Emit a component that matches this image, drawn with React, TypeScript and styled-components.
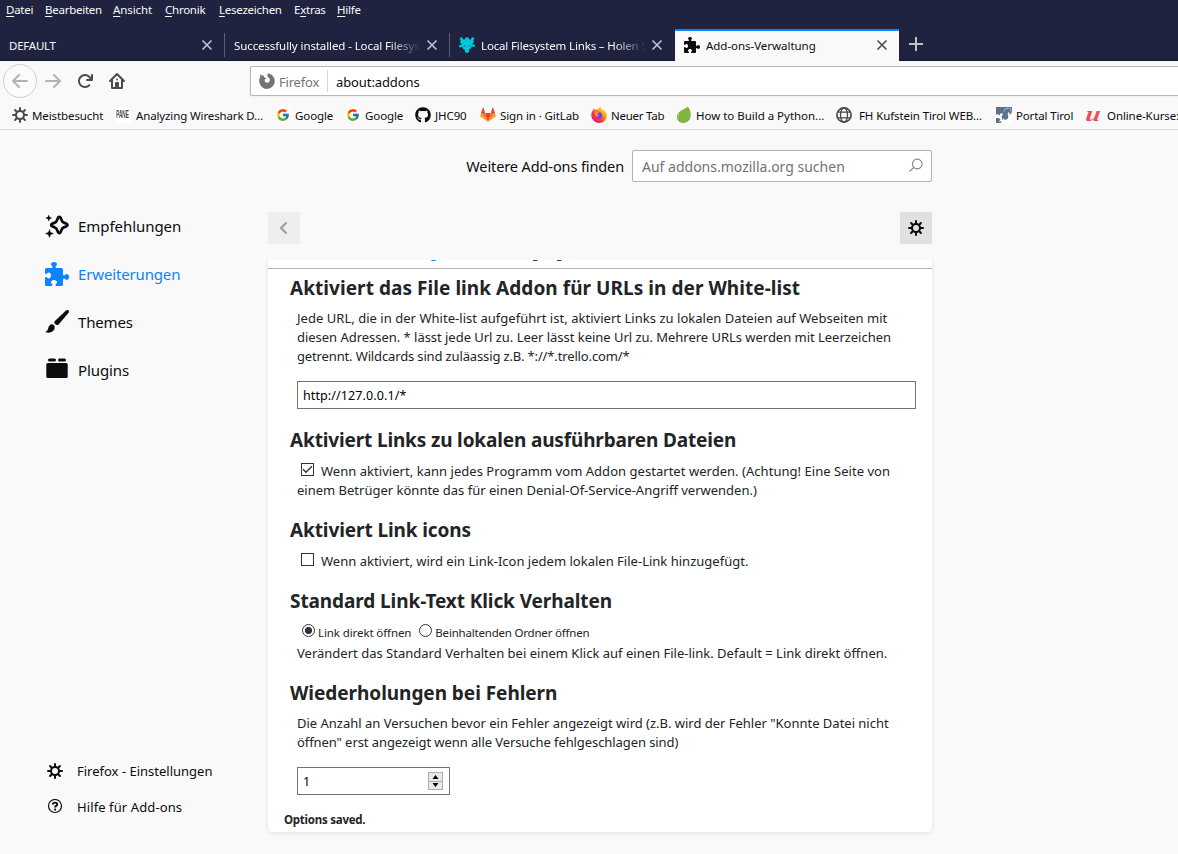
import React from "react";
import styled, { createGlobalStyle, css } from "styled-components";
import { FcGoogle } from "react-icons/fc";
import { FaGithub } from "react-icons/fa";

const Global = createGlobalStyle`
  * { box-sizing: border-box; }
  html, body { margin: 0; padding: 0; }
  body {
    width: 1178px; height: 854px; overflow: hidden;
    font-family: "Noto Sans", "Open Sans", sans-serif;
    background: #f9f9fa; color: #0c0c0d;
  }
`;

const Window = styled.div`
  width: 1178px;
  height: 854px;
  overflow: hidden;
  display: flex;
  flex-direction: column;
  background: #f9f9fa;
`;

const Label = styled.span<{ $ls?: number }>`
  white-space: nowrap;
  letter-spacing: ${(p) => p.$ls ?? 0}px;
`;

/* ---------- menu bar ---------- */
const MenuBar = styled.nav`
  height: 29px;
  display: flex;
  padding-left: 6px;
  background: #20233f;
  color: #f9f9fa;
  font-size: 11.5px;
  line-height: 19px;
`;
const MenuItem = styled.span<{ $w: number; $ls?: number }>`
  width: ${(p) => p.$w}px;
  flex: none;
  white-space: nowrap;
  letter-spacing: ${(p) => p.$ls ?? -0.25}px;
  u { text-underline-offset: 2px; text-decoration-thickness: 1px; }
`;

/* ---------- tabs ---------- */
const TabStrip = styled.div`
  height: 32px;
  display: flex;
  background: #20233f;
  box-shadow: inset 0 -1px 0 #14162b;
`;
const Tab = styled.div<{ $active?: boolean; $sep?: boolean }>`
  position: relative;
  width: 225px;
  flex: none;
  display: flex;
  align-items: center;
  padding: 0 12px 0 9px;
  font-size: 11.5px;
  color: #f9f9fa;
  ${(p) =>
    p.$active &&
    css`
      width: 224px;
      background: #f9f9fa;
      color: #0c0c0d;
      border-top: 2px solid #0a84ff;
      padding: 0 11px 2px 9px;
    `}
  ${(p) =>
    p.$sep &&
    css`
      &::after {
        content: "";
        position: absolute;
        right: 0;
        top: 4px;
        height: 24px;
        width: 1px;
        background: #5b5d73;
      }
    `}
`;
const TabText = styled.span<{ $fade?: boolean; $ls?: number }>`
  flex: 1;
  min-width: 0;
  overflow: hidden;
  white-space: nowrap;
  letter-spacing: ${(p) => p.$ls ?? -0.1}px;
  ${(p) =>
    p.$fade &&
    css`
      mask-image: linear-gradient(to left, transparent 0, #000 32px);
    `}
`;
const TabIcon = styled.span`
  width: 16px;
  height: 16px;
  margin-right: 6px;
  flex: none;
  display: flex;
`;
const CloseIcon = styled.svg<{ $c: string }>`
  width: 12px;
  height: 12px;
  margin-left: 5px;
  flex: none;
  stroke: ${(p) => p.$c};
`;
const NewTab = styled.span`
  width: 34px;
  display: flex;
  align-items: center;
  justify-content: center;
  padding-bottom: 2px;
`;

/* ---------- navigation ---------- */
const NavBar = styled.div`
  height: 40px;
  flex: none;
  display: flex;
  align-items: center;
  padding-left: 3px;
`;
const BackButton = styled.span`
  width: 34px;
  height: 34px;
  border: 1px solid #d0d0d1;
  border-radius: 50%;
  display: flex;
  align-items: center;
  justify-content: center;
  color: #b3b3b4;
  background: #fbfbfb;
`;
const NavButton = styled.span<{ $c: string }>`
  width: 32px;
  display: flex;
  justify-content: center;
  color: ${(p) => p.$c};
`;
const UrlBar = styled.div`
  margin-left: 117px;
  flex: 1;
  height: 30px;
  border: 1px solid #b8b8b9;
  border-right: 0;
  border-radius: 2px 0 0 2px;
  background: #fff;
  display: flex;
  align-items: center;
  font-size: 13px;
  box-shadow: 0 1px 3px rgba(0, 0, 0, 0.05);
  ${Label} { padding-top: 2px; }
`;
const Identity = styled.span`
  width: 77px;
  height: 22px;
  padding-left: 8px;
  display: flex;
  align-items: center;
  gap: 4px;
  color: #737373;
  border-right: 1px solid #d7d7db;
  margin-right: 8px;
`;

/* ---------- bookmarks ---------- */
const BookmarkBar = styled.div`
  height: 29px;
  flex: none;
  display: flex;
  align-items: center;
  padding-left: 12px;
  border-bottom: 1px solid #dcdcdd;
  font-size: 11.5px;
`;
const Bookmark = styled.span<{ $w: number; $gap?: number }>`
  width: ${(p) => p.$w}px;
  flex: none;
  display: flex;
  align-items: center;
  gap: ${(p) => p.$gap ?? 4}px;
  > svg { flex: none; }
`;
const GoogleMark = styled.span`
  width: 16px;
  height: 16px;
  flex: none;
  display: flex;
  align-items: center;
  justify-content: center;
  background: #fff;
  border-radius: 50%;
`;
const GearTint = styled.span`
  color: #4a4a4f;
  display: flex;
`;
const PaneMark = styled.span`
  width: 16px;
  height: 16px;
  flex: none;
  background: #fff;
  display: flex;
  align-items: center;
  justify-content: center;
  font: 700 10px/16px "Liberation Sans", sans-serif;
  color: #444;
  span { transform: scaleX(0.47); }
`;
const UMark = styled.span`
  width: 16px;
  flex: none;
  text-align: center;
  font: italic 700 22px/14px "Liberation Serif", serif;
  color: #ea5252;
  padding-bottom: 3px;
  span { display: inline-block; transform: scaleX(1.2) skewX(-6deg); }
`;

/* ---------- page ---------- */
const Page = styled.div`
  flex: 1;
  display: flex;
`;
const Sidebar = styled.aside`
  width: 268px;
  flex: none;
  display: flex;
  flex-direction: column;
  padding: 72px 0 29px 45px;
`;
const Category = styled.a<{ $active?: boolean }>`
  height: 48px;
  display: flex;
  align-items: center;
  gap: 9px;
  font-size: 15px;
  color: ${(p) => (p.$active ? "#0a84ff" : "#0c0c0d")};
`;
const Spacer = styled.div`
  flex: 1;
`;
const FooterLink = styled.a`
  height: 36px;
  display: flex;
  align-items: center;
  gap: 14px;
  padding-left: 2px;
  font-size: 13px;
`;
const Main = styled.main`
  width: 664px;
  display: flex;
  flex-direction: column;
`;
const SearchRow = styled.div`
  margin-top: 20px;
  display: flex;
  justify-content: flex-end;
  align-items: center;
  gap: 8px;
  font-size: 14.5px;
`;
const SearchBox = styled.div`
  width: 300px;
  height: 32px;
  border: 1px solid #b1b1b3;
  border-radius: 2px;
  background: #fff;
  display: flex;
  align-items: center;
  justify-content: space-between;
  padding: 0 7px 0 9px;
  color: #737373;
  font-size: 14px;
`;
const ToolRow = styled.div`
  margin-top: 30px;
  display: flex;
  justify-content: space-between;
`;
const Square = styled.span<{ $bg: string; $c: string }>`
  width: 32px;
  height: 32px;
  border-radius: 2px;
  display: flex;
  align-items: center;
  justify-content: center;
  background: ${(p) => p.$bg};
  color: ${(p) => p.$c};
`;
const Card = styled.section`
  margin-top: 16px;
  height: 572px;
  background: #fff;
  border-radius: 0 0 4px 4px;
  box-shadow: 0 1px 4px rgba(12, 12, 13, 0.1);
  clip-path: inset(0 -8px -8px -8px);
  color: #222426;
`;
const DeckTabs = styled.div`
  height: 9px;
  overflow: hidden;
  border-bottom: 1px solid #b1b1b3;
  display: flex;
  gap: 28px;
  padding-left: 102px;
  font-size: 13px;
`;
const DeckTab = styled.span<{ $active?: boolean }>`
  height: 20px;
  line-height: 20px;
  margin-top: -17px;
  white-space: nowrap;
  color: ${(p) => (p.$active ? "#0a84ff" : "#38383d")};
`;
const Heading = styled.h2<{ $ls?: number; $top: number }>`
  margin: ${(p) => p.$top}px 0 0 22px;
  height: 24px;
  font-size: 19px;
  line-height: 24px;
  font-weight: 700;
  white-space: nowrap;
  letter-spacing: ${(p) => p.$ls ?? 0}px;
`;
const Para = styled.div<{ $top: number }>`
  margin: ${(p) => p.$top}px 0 0 29px;
  font-size: 13px;
  line-height: 19px;
`;
const Line = styled.div<{ $ls?: number }>`
  height: 19px;
  display: flex;
  align-items: center;
  white-space: nowrap;
  letter-spacing: ${(p) => p.$ls ?? 0}px;
`;
const Field = styled.div<{ $w: number }>`
  margin: 15px 0 0 29px;
  width: ${(p) => p.$w}px;
  height: 28px;
  border: 1px solid #737373;
  background: #fff;
  color: #000;
  padding: 0 6px 0 5px;
  display: flex;
  align-items: center;
  justify-content: space-between;
  font-size: 12.5px;
`;
const Check = styled.span`
  width: 13px;
  height: 13px;
  border: 1px solid #333;
  margin: -4px 7px 0 4px;
  display: flex;
`;
const Radio = styled.span<{ $on?: boolean }>`
  width: 13px;
  height: 13px;
  border: 1px solid #333;
  border-radius: 50%;
  margin: -4px 3px 0 5px;
  ${(p) => p.$on && css`background: radial-gradient(circle, #333 3.2px, #fff 4px);`}
`;
const RadioLine = styled.div`
  height: 19px;
  margin: 10px 0 0 29px;
  display: flex;
  align-items: center;
  font-size: 11.5px;
`;
const RadioLabel = styled(Label)`
  margin-right: 3px;
`;
const Spin = styled.span`
  width: 15px;
  height: 18px;
  display: flex;
  flex-direction: column;
  border: 1px solid #adadad;
  background: #e9e9e9;
`;
const SpinHalf = styled.span`
  flex: 1;
  display: flex;
  align-items: center;
  justify-content: center;
  & + & { border-top: 1px solid #adadad; }
`;
const Saved = styled.div`
  margin: 16px 0 0 16px;
  font-size: 11.5px;
  line-height: 18px;
  font-weight: 700;
  letter-spacing: -0.25px;
`;

/* ---------- icons ---------- */
const Ico = ({ d, s = 16 }: { d: string; s?: number }) => (
  <svg width={s} height={s} viewBox="0 0 16 16" fill="currentColor" fillRule="evenodd">
    <path d={d} />
  </svg>
);
const PUZZLE =
  "M14.5 8c-.971 0-1 1-1.75 1a.765.765 0 0 1-.75-.75V5a1 1 0 0 0-1-1H7.75A.765.765 0 0 1 7 3.25c0-.75 1-.779 1-1.75C8 .635 7.1 0 6 0S4 .635 4 1.5c0 .971 1 1 1 1.75a.765.765 0 0 1-.75.75H1a1 1 0 0 0-1 1v2.25A.765.765 0 0 0 .75 8c.75 0 .779-1 1.75-1C3.365 7 4 7.9 4 9s-.635 2-1.5 2c-.971 0-1-1-1.75-1a.765.765 0 0 0-.75.75V15a1 1 0 0 0 1 1h3.25a.765.765 0 0 0 .75-.75c0-.75-1-.779-1-1.75 0-.865.9-1.5 2-1.5s2 .635 2 1.5c0 .971-1 1-1 1.75a.765.765 0 0 0 .75.75H11a1 1 0 0 0 1-1v-3.25a.765.765 0 0 1 .75-.75c.75 0 .779 1 1.75 1 .865 0 1.5-.9 1.5-2s-.635-2-1.5-2z";
const GEAR =
  "M15 7h-2.1a4.967 4.967 0 0 0-.732-1.753l1.49-1.49a1 1 0 0 0-1.414-1.414l-1.49 1.49A4.968 4.968 0 0 0 9 3.1V1a1 1 0 0 0-2 0v2.1a4.968 4.968 0 0 0-1.753.732l-1.49-1.49a1 1 0 0 0-1.414 1.415l1.49 1.49A4.967 4.967 0 0 0 3.1 7H1a1 1 0 0 0 0 2h2.1a4.968 4.968 0 0 0 .732 1.753l-1.49 1.49a1 1 0 1 0 1.414 1.414l1.49-1.49A4.968 4.968 0 0 0 7 12.9V15a1 1 0 0 0 2 0v-2.1a4.968 4.968 0 0 0 1.753-.732l1.49 1.49a1 1 0 0 0 1.414-1.414l-1.49-1.49A4.967 4.967 0 0 0 12.9 9H15a1 1 0 0 0 0-2zM5 8a3 3 0 1 1 3 3 3 3 0 0 1-3-3z";
const BACK =
  "M15 7H3.414l4.293-4.293a1 1 0 0 0-1.414-1.414l-6 6a1 1 0 0 0 0 1.414l6 6a1 1 0 0 0 1.414-1.414L3.414 9H15a1 1 0 0 0 0-2z";
const FORWARD =
  "M1 7h11.586L8.293 2.707a1 1 0 0 1 1.414-1.414l6 6a1 1 0 0 1 0 1.414l-6 6a1 1 0 0 1-1.414-1.414L12.586 9H1a1 1 0 0 1 0-2z";
const RELOAD =
  "M15 1a1 1 0 0 0-1 1v2.418A6.995 6.995 0 1 0 8 15a6.954 6.954 0 0 0 4.95-2.05 1 1 0 0 0-1.414-1.414A5.019 5.019 0 1 1 12.549 6H10a1 1 0 0 0 0 2h5a1 1 0 0 0 1-1V2a1 1 0 0 0-1-1z";
const HOME =
  "M15.707 7.293l-7-7a1 1 0 0 0-1.414 0l-7 7a1 1 0 0 0 1.414 1.414L2 8.414V15a1 1 0 0 0 1 1h10a1 1 0 0 0 1-1V8.414l.293.293a1 1 0 0 0 1.414-1.414zM12 14h-2v-4a1 1 0 0 0-1-1H7a1 1 0 0 0-1 1v4H4V6.414l4-4 4 4zM8 5.6a.9.9 0 1 1 0 1.8.9.9 0 0 1 0-1.8z";
const FOX =
  "M1.6 1c.3.7.8 1.200 1.300 1.600.8-.2 1.500-.1 2.100.2-.4.700-.2 1.400.5 1.800l1.900.4c0 .8-1.500 1.100-1.800 1.700-.1 1.800 1 3 2.500 3 1.800 0 2.900-1.300 2.800-2.900-.1-1-.7-1.800-1.400-2.300C8.200 3.500 7.800 2 9 .4c3.600.3 6.800 3.600 6.800 7.600a7.800 7.800 0 0 1-15.600.2c0-1.700.3-3 1-4.200-.2-1 0-2.100.4-3z";

const Close = ({ c }: { c: string }) => (
  <CloseIcon $c={c} viewBox="0 0 12 12" fill="none" strokeWidth="1.6">
    <path d="M1.5 1.5l9 9M10.5 1.5l-9 9" />
  </CloseIcon>
);
const AmoIcon = () => (
  <svg width="16" height="16" viewBox="0 0 16 16" fill="#00c8d7">
    <path d="M2.2.2c1 0 1.500.7 1.500 1.400 0 .5.300.9.9.9h1c.5 0 .6-.4.5-.9C6 .8 7 .2 8 .2s2 .6 1.900 1.400c-.1.500 0 .9.5.9h1c.6 0 .9-.4.9-.9 0-.7.500-1.400 1.500-1.400s1.500.8 1.400 1.500c-.1.9-.9 1-.9 1.600 0 .5.300.8.6 1.200.3.600 0 1-.5 1.300-.6.4-1 .6-.9 1.200.1.500.600.500 1.200.4.700-.1 1.300.300 1.300 1.200s-.7 1.400-1.500 1.300c-.7-.1-.8-.5-1.300-.5-.6 0-.7.5-.9 1.200-.2.900-.8 1.300-1.400 1.400-.6.1-.8.5-.8 1C10.100 14.700 9.400 16 8 16s-2.100-1.300-2.100-2.500c0-.5-.2-.9-.8-1-.6-.1-1.200-.5-1.400-1.400-.2-.7-.3-1.200-.9-1.200-.5 0-.6.4-1.300.5C.7 10.500 0 10 0 9.100s.600-1.300 1.300-1.200c.600.1 1.100.1 1.200-.4.100-.600-.3-.8-.9-1.200-.5-.3-.8-.7-.5-1.300.3-.4.6-.7.6-1.200 0-.6-.8-.7-.9-1.600C.7 1 1.200.2 2.200.2z" />
    <path d="M4.900 9.300c.2-.8 1.100-.9 1.500-.1M11.100 9.300c-.2-.8-1.100-.9-1.500-.1" stroke="#20233f" strokeWidth=".7" fill="none" />
  </svg>
);
const GitLabIcon = () => (
  <svg width="16" height="16" viewBox="0 0 16 16">
    <path d="M8 15L5.100 6h5.800z" fill="#e24329" />
    <path d="M8 15L5.100 6H1z" fill="#fc6d26" />
    <path d="M8 15l2.900-9H15z" fill="#fc6d26" />
    <path d="M1 6L.1 8.700c-.1.300 0 .600.200.700L8 15zM15 6l.9 2.700c.1.300 0 .600-.2.700L8 15z" fill="#fca326" />
    <path d="M1 6L2.900.7c.1-.3.500-.3.600 0L5.100 6zM15 6L13.100.7c-.1-.3-.5-.3-.6 0L10.900 6z" fill="#e24329" />
  </svg>
);
const FirefoxIcon = () => (
  <svg width="16" height="16" viewBox="0 0 16 16">
    <defs>
      <linearGradient id="fx" x1="0.85" y1="0.1" x2="0.15" y2="0.9">
        <stop offset="0" stopColor="#fff44f" />
        <stop offset="0.35" stopColor="#ff980e" />
        <stop offset="0.65" stopColor="#ff3647" />
        <stop offset="1" stopColor="#e31587" />
      </linearGradient>
    </defs>
    <path d="M9.300 0c1 .7 1.500 1.700 1.700 2.600l1-.2c2.600 1.300 4 3.500 4 6a7.800 7.600 0 0 1-15.700 0C.2 6 1 4.300 2 3l.5-1.600c.5.3.9.7 1.200 1.200 1.200-.4 2.300-.2 3.200.2C7.100 1.700 8 .6 9.300 0z" fill="url(#fx)" />
    <circle cx="8.100" cy="8.400" r="3.100" fill="#7542e5" />
    <path d="M3.700 5.300c1.500-.8 3-.5 4.200.4-.2.900-1.400 1-1.800 1.500-.1.900 1 1.500 2.100 1.100-1 2-3.600 1.500-4.300-.3z" fill="#ff9a1f" />
  </svg>
);
const LeafIcon = () => (
  <svg width="16" height="16" viewBox="0 0 16 16">
    <path d="M11.200.2c.7-.4 1.300-.1 1.900 1 1.800 3.400 2.300 8 .6 11-1.500 2.700-4.400 4-7.300 3.700C3.200 15.600 1 13.200 1 9.800 1 4.500 7.500 2.500 11.200.2z" fill="#81b441" />
    <path d="M3.200 5.600c-.8 1.500-1 3.400-.3 5.200" stroke="#a9cf7d" strokeWidth=".8" fill="none" />
  </svg>
);
const GlobeIcon = () => (
  <svg width="16" height="16" viewBox="0 0 16 16" fill="none" stroke="#4a4a4f" strokeWidth="1.300">
    <circle cx="8" cy="8" r="7.100" strokeWidth="1.700" />
    <ellipse cx="8" cy="8" rx="3.500" ry="7" />
    <path d="M1.500 5.200h13M1.500 10.800h13" />
  </svg>
);
const TirolIcon = () => (
  <svg width="16" height="16" viewBox="0 0 16 16">
    <rect width="16" height="16" fill="#5c718c" />
    <path d="M0 8l2-1 1.500 1.500L5 6l2 1-1 2 1 2 2 2 2.500-1 1-2.500-1-3L13 5l1 3 2-3v11H5l.5-2-2.500 1 1.500-3L2 11H0z" fill="#fff" />
    <path d="M7.500 4l1.500-1 .5-1.500 1.500.5 1-1.500 1 1 1.500 0 .5 3" fill="none" stroke="#cfd8e2" strokeWidth="1" strokeDasharray="1.500 .8" />
    <path d="M6 9l1 3.500" stroke="#5c718c" strokeWidth="1.200" />
  </svg>
);
const SparkleIcon = () => (
  <svg width="24" height="24" viewBox="0 0 24 24" fill="#0c0c0d">
    <path
      d="M14.300 3c1.200 0 1.600 1.400 2 2.600.6 1.800 1.200 2.600 2.900 3.200 1.500.5 3.200 1 3.200 2.200s-1.700 1.700-3.200 2.200c-1.700.6-2.300 1.400-2.900 3.200-.4 1.200-.8 2.600-2 2.600s-1.600-1.400-2-2.600c-.6-1.800-1.200-2.600-2.900-3.200-1.500-.5-3.200-1-3.200-2.200s1.700-1.700 3.200-2.200c1.700-.6 2.300-1.400 2.900-3.200.4-1.200.8-2.600 2-2.600z"
      fill="none"
      stroke="#0c0c0d"
      strokeWidth="2.800"
    />
    <path d="M3.700.5l1 2.500 2.500 1-2.500 1-1 2.500-1-2.500-2.500-1 2.500-1zM4.500 15l1.300 3.200 3.200 1.300-3.200 1.300L4.500 24l-1.300-3.200L0 19.500l3.200-1.300z" />
  </svg>
);
const BrushIcon = () => (
  <svg width="24" height="24" viewBox="0 0 24 24" fill="#0c0c0d">
    <path d="M23.600.4c.7.7.5 1.700-.2 2.500l-9.800 11.500c-1 .9-2.500.7-3.500-.3s-1.200-2.300-.2-3.200L21 .6c.8-.7 1.900-.9 2.600-.2z" />
    <path d="M8 14.700c1.500.2 2.300 1.400 2.200 3.100-.1 2.600-2.700 5.200-6.500 5.200-1.400 0-2.700-.3-3.700-.9 2-.3 2.700-1.300 3.300-3.300.7-2.700 2.200-4.500 4.700-4.100z" transform="translate(0 -.3) scale(.95 1)" />
  </svg>
);
const PluginIcon = () => (
  <svg width="24" height="24" viewBox="0 0 24 24" fill="#0c0c0d">
    <rect x="3" y="0.5" width="8" height="3" rx="1.500" />
    <rect x="13" y="0.5" width="8" height="3" rx="1.500" />
    <rect x="1.300" y="5" width="21.400" height="15" rx="1.500" />
  </svg>
);
const HelpIcon = () => (
  <svg width="16" height="16" viewBox="0 0 16 16" fill="none" stroke="#0c0c0d">
    <circle cx="8" cy="7" r="6.500" strokeWidth="1.200" />
    <path d="M5.900 5.500c0-1.300 1-1.900 2.100-1.900s2.200.8 2.200 1.900c0 1.400-2.100 1.400-2.100 2.900" strokeWidth="1.900" />
    <circle cx="8.100" cy="10.600" r="1.100" fill="#0c0c0d" stroke="none" />
  </svg>
);
const SearchIcon = () => (
  <svg width="16" height="16" viewBox="0 0 16 16" fill="none" stroke="#858586" strokeWidth="1.100">
    <circle cx="9.300" cy="6" r="4.900" />
    <path d="M5.800 9.500L1.500 13.500" />
  </svg>
);
const ChevronIcon = () => (
  <svg width="16" height="16" viewBox="0 0 16 16" fill="none" stroke="currentColor" strokeWidth="2" strokeLinecap="round" strokeLinejoin="round">
    <path d="M10 3L5 8l5 5" />
  </svg>
);

export default function App() {
  return (
    <>
      <Global />
      <Window>
        <MenuBar>
          <MenuItem $w={39}><u>D</u>atei</MenuItem>
          <MenuItem $w={68}><u>B</u>earbeiten</MenuItem>
          <MenuItem $w={52} $ls={-0.1}><u>A</u>nsicht</MenuItem>
          <MenuItem $w={54}><u>C</u>hronik</MenuItem>
          <MenuItem $w={75}><u>L</u>esezeichen</MenuItem>
          <MenuItem $w={43}>E<u>x</u>tras</MenuItem>
          <MenuItem $w={40}><u>H</u>ilfe</MenuItem>
        </MenuBar>
        <TabStrip>
          <Tab $sep><TabText $ls={-0.25}>DEFAULT</TabText><Close c="#c3c3ca" /></Tab>
          <Tab $sep><TabText $fade>Successfully installed - Local Filesystem Links</TabText><Close c="#c3c3ca" /></Tab>
          <Tab>
            <TabIcon><AmoIcon /></TabIcon>
            <TabText $fade $ls={-0.15}>Local Filesystem Links – Holen Sie</TabText>
            <Close c="#c3c3ca" />
          </Tab>
          <Tab $active>
            <TabIcon><Ico d={PUZZLE} /></TabIcon>
            <TabText $ls={-0.03}>Add-ons-Verwaltung</TabText>
            <Close c="#4a4a4f" />
          </Tab>
          <NewTab>
            <svg width="14" height="14" viewBox="0 0 14 14" stroke="#c3c3ca" strokeWidth="2"><path d="M7 0v14M0 7h14" /></svg>
          </NewTab>
        </TabStrip>
        <NavBar>
          <BackButton><Ico d={BACK} /></BackButton>
          <NavButton $c="#b3b3b4"><Ico d={FORWARD} /></NavButton>
          <NavButton $c="#4a4a4f"><Ico d={RELOAD} /></NavButton>
          <NavButton $c="#4a4a4f"><Ico d={HOME} /></NavButton>
          <UrlBar>
            <Identity><Ico d={FOX} /><Label $ls={-0.2}>Firefox</Label></Identity>
            <Label $ls={-0.1}>about:addons</Label>
          </UrlBar>
        </NavBar>
        <BookmarkBar>
          <Bookmark $w={103}><GearTint><Ico d={GEAR} /></GearTint><Label $ls={-0.1}>Meistbesucht</Label></Bookmark>
          <Bookmark $w={160} $gap={5}><PaneMark><span>PANE</span></PaneMark><Label $ls={-0.13}>Analyzing Wireshark D...</Label></Bookmark>
          <Bookmark $w={70}><GoogleMark><FcGoogle size={14} /></GoogleMark><Label $ls={-0.1}>Google</Label></Bookmark>
          <Bookmark $w={70}><GoogleMark><FcGoogle size={14} /></GoogleMark><Label $ls={-0.1}>Google</Label></Bookmark>
          <Bookmark $w={65}><FaGithub size={16} /><Label $ls={-0.1}>JHC90</Label></Bookmark>
          <Bookmark $w={111}><GitLabIcon /><Label $ls={-0.1}>Sign in · GitLab</Label></Bookmark>
          <Bookmark $w={85}><FirefoxIcon /><Label $ls={-0.25}>Neuer Tab</Label></Bookmark>
          <Bookmark $w={160}><LeafIcon /><Label $ls={-0.02}>How to Build a Python...</Label></Bookmark>
          <Bookmark $w={160} $gap={7}><GlobeIcon /><Label $ls={-0.1}>FH Kufstein Tirol WEB...</Label></Bookmark>
          <Bookmark $w={89}><TirolIcon /><Label $ls={-0.15}>Portal Tirol</Label></Bookmark>
          <Bookmark $w={110} $gap={6}><UMark><span>u</span></UMark><Label $ls={-0.1}>Online-Kurse:</Label></Bookmark>
        </BookmarkBar>
        <Page>
          <Sidebar>
            <Category><SparkleIcon /><Label $ls={-0.05}>Empfehlungen</Label></Category>
            <Category $active><Ico d={PUZZLE} s={24} /><Label $ls={-0.15}>Erweiterungen</Label></Category>
            <Category><BrushIcon /><Label $ls={-0.15}>Themes</Label></Category>
            <Category><PluginIcon /><Label $ls={-0.1}>Plugins</Label></Category>
            <Spacer />
            <FooterLink><Ico d={GEAR} /><Label>Firefox - Einstellungen</Label></FooterLink>
            <FooterLink><HelpIcon /><Label $ls={0.1}>Hilfe für Add-ons</Label></FooterLink>
          </Sidebar>
          <Main>
            <SearchRow>
              <Label $ls={-0.11}>Weitere Add-ons finden</Label>
              <SearchBox><Label>Auf addons.mozilla.org suchen</Label><SearchIcon /></SearchBox>
            </SearchRow>
            <ToolRow>
              <Square $bg="#eeeeee" $c="#9b9b9c"><ChevronIcon /></Square>
              <Square $bg="#e0e0e1" $c="#0c0c0d"><Ico d={GEAR} /></Square>
            </ToolRow>
            <Card>
              <DeckTabs>
                <DeckTab $active>Einstellungen</DeckTab>
                <DeckTab>Berechtigungen</DeckTab>
              </DeckTabs>
              <Heading $top={7} $ls={0.055}>Aktiviert das File link Addon für URLs in der White-list</Heading>
              <Para $top={9}>
                <Line $ls={0.03}>Jede URL, die in der White-list aufgeführt ist, aktiviert Links zu lokalen Dateien auf Webseiten mit</Line>
                <Line $ls={-0.03}>diesen Adressen. * lässt jede Url zu. Leer lässt keine Url zu. Mehrere URLs werden mit Leerzeichen</Line>
                <Line $ls={-0.14}>getrennt. Wildcards sind zuläassig z.B. *://*.trello.com/*</Line>
              </Para>
              <Field $w={619}><Label $ls={0.1}>http://127.0.0.1/*</Label></Field>
              <Heading $top={19} $ls={-0.15}>Aktiviert Links zu lokalen ausführbaren Dateien</Heading>
              <Para $top={10}>
                <Line $ls={0.035}>
                  <Check>
                    <svg width="11" height="11" viewBox="0 0 11 11" fill="none" stroke="#333" strokeWidth="1.400"><path d="M1 5.200l3 3L10 2.200" /></svg>
                  </Check>
                  Wenn aktiviert, kann jedes Programm vom Addon gestartet werden. (Achtung! Eine Seite von
                </Line>
                <Line>einem Betrüger könnte das für einen Denial-Of-Service-Angriff verwenden.)</Line>
              </Para>
              <Heading $top={18} $ls={-0.1}>Aktiviert Link icons</Heading>
              <Para $top={10}>
                <Line $ls={0.01}><Check />Wenn aktiviert, wird ein Link-Icon jedem lokalen File-Link hinzugefügt.</Line>
              </Para>
              <Heading $top={18} $ls={-0.09}>Standard Link-Text Klick Verhalten</Heading>
              <RadioLine>
                <Radio $on /><RadioLabel $ls={-0.1}>Link direkt öffnen</RadioLabel>
                <Radio /><RadioLabel $ls={-0.2}>Beinhaltenden Ordner öffnen</RadioLabel>
              </RadioLine>
              <Para $top={2}>
                <Line $ls={0.01}>Verändert das Standard Verhalten bei einem Klick auf einen File-link. Default = Link direkt öffnen.</Line>
              </Para>
              <Heading $top={18} $ls={-0.04}>Wiederholungen bei Fehlern</Heading>
              <Para $top={9}>
                <Line $ls={-0.01}>Die Anzahl an Versuchen bevor ein Fehler angezeigt wird (z.B. wird der Fehler "Konnte Datei nicht</Line>
                <Line $ls={-0.08}>öffnen" erst angezeigt wenn alle Versuche fehlgeschlagen sind)</Line>
              </Para>
              <Field $w={153}>
                <Label>1</Label>
                <Spin>
                  <SpinHalf><svg width="7" height="4" viewBox="0 0 7 4"><path d="M0.500 4l3-4 3 4z" /></svg></SpinHalf>
                  <SpinHalf><svg width="7" height="4" viewBox="0 0 7 4"><path d="M0.500 0l3 4 3-4z" /></svg></SpinHalf>
                </Spin>
              </Field>
              <Saved>Options saved.</Saved>
            </Card>
          </Main>
        </Page>
      </Window>
    </>
  );
}
